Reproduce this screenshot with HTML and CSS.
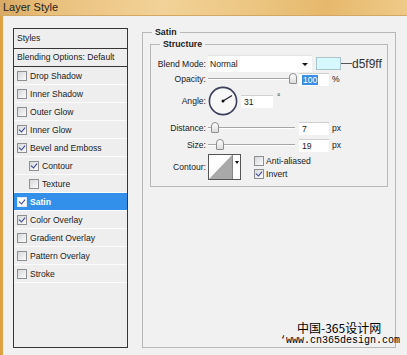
FILE: index.html
```html
<!DOCTYPE html>
<html lang="en">
<head>
  <meta charset="UTF-8" />
  <title>Layer Style</title>
  <link rel="stylesheet" href="styles.css">
</head>
<body>
  <div class="titlebar">Layer Style</div>

  <div class="window">
    <div class="styles-panel">
      <div class="panel-head">Styles</div>
      <div class="panel-blend">Blending Options: Default</div>
      <div class="fx"><span class="cb"></span>Drop Shadow</div>
      <div class="fx"><span class="cb"></span>Inner Shadow</div>
      <div class="fx"><span class="cb"></span>Outer Glow</div>
      <div class="fx"><span class="cb on"></span>Inner Glow</div>
      <div class="fx"><span class="cb on"></span>Bevel and Emboss</div>
      <div class="fx sub"><span class="cb on"></span>Contour</div>
      <div class="fx sub"><span class="cb"></span>Texture</div>
      <div class="fx active"><span class="cb on"></span>Satin</div>
      <div class="fx"><span class="cb on"></span>Color Overlay</div>
      <div class="fx"><span class="cb"></span>Gradient Overlay</div>
      <div class="fx"><span class="cb"></span>Pattern Overlay</div>
      <div class="fx"><span class="cb"></span>Stroke</div>
    </div>

    <fieldset class="group">
      <legend>Satin</legend>
      <fieldset class="group inner">
        <legend>Structure</legend>

        <div class="row r-blend">
          <span class="lbl">Blend Mode:</span>
          <div class="select">Normal<span class="arrow"></span></div>
          <span class="swatch"></span>
          <span class="leader"></span>
          <span class="hex">d5f9ff</span>
        </div>

        <div class="row r-field">
          <span class="lbl">Opacity:</span>
          <div class="slider"><span class="thumb" style="left:81px"></span></div>
          <span class="field"><span class="sel">100</span></span>
          <span class="unit">%</span>
        </div>

        <div class="row r-angle">
          <span class="lbl">Angle:</span>
          <svg class="dial" width="30" height="30" viewBox="0 0 30 30">
            <circle cx="15" cy="15" r="13.6" fill="#f7f7f7" stroke="#3c3f5c" stroke-width="1.6"/>
            <line x1="15" y1="15" x2="24" y2="9.6" stroke="#1c1c2c" stroke-width="1.2"/>
            <circle cx="15" cy="15" r="1.5" fill="#111"/>
          </svg>
          <span class="field angle">31</span>
          <span class="deg">°</span>
        </div>

        <div class="row r-field r-dist">
          <span class="lbl">Distance:</span>
          <div class="slider"><span class="thumb" style="left:3px"></span></div>
          <span class="field">7</span>
          <span class="unit">px</span>
        </div>

        <div class="row r-field r-size">
          <span class="lbl">Size:</span>
          <div class="slider"><span class="thumb" style="left:8px"></span></div>
          <span class="field">19</span>
          <span class="unit">px</span>
        </div>

        <div class="row r-contour">
          <span class="lbl">Contour:</span>
          <div class="contour">
            <svg width="23" height="24" viewBox="0 0 23 24">
              <rect width="23" height="24" fill="#fff"/>
              <polygon points="0,24 23,0 23,24" fill="#a9a9a9"/>
            </svg>
            <span class="drop"><span class="arrow"></span></span>
          </div>
          <div class="checks">
            <div class="check"><span class="cb"></span>Anti-aliased</div>
            <div class="check"><span class="cb on"></span>Invert</div>
          </div>
        </div>
      </fieldset>
    </fieldset>

    <div class="watermark">
      <div class="wm-cn">中国-365设计网</div>
      <div class="wm-url">‘www.cn365design.com</div>
    </div>
  </div>
</body>
</html>
```

FILE: styles.css
```css
body {
  margin: 0;
  width: 407px;
  height: 355px;
  overflow: hidden;
  font-family: "Liberation Sans", Arial, sans-serif;
  font-size: 8.6px;
  color: #1b1b1b;
  background: #f0f0f0;
}

.titlebar {
  height: 15px;
  padding-left: 3px;
  font-size: 11px;
  line-height: 14px;
  color: #1e1e1e;
  border-bottom: 1px solid #d2a866;
  background: linear-gradient(90deg, #d8aa63 0%, #e9c07c 12%, #f2d298 40%, #ecc682 62%, #e6b86c 80%, #efca88 100%);
}

.window {
  position: relative;
  display: flex;
  gap: 14px;
  height: 339px;
  box-sizing: border-box;
  padding: 12px 11px 0 10px;
  border-left: 3px solid #e0a046;
  background: #f1f1f1;
}

/* left list of effects */
.styles-panel {
  flex: none;
  width: 115px;
  height: 320px;
  box-sizing: border-box;
  border: 1px solid #363636;
  background: #eeeeee;
}
.panel-head {
  height: 19px;
  line-height: 19px;
  padding-left: 3px;
  border-bottom: 1px solid #363636;
}
.panel-blend {
  height: 17px;
  line-height: 17px;
  padding-left: 3px;
  border-bottom: 1px solid #363636;
}
.fx {
  display: flex;
  align-items: center;
  gap: 3px;
  height: 17px;
  padding-left: 3px;
  border-bottom: 1px solid #fbfbfb;
}
.fx.sub {
  padding-left: 15px;
}
.fx.active {
  background: #3390ea;
  color: #fff;
  font-weight: bold;
}

.cb {
  position: relative;
  flex: none;
  width: 10px;
  height: 10px;
  box-sizing: border-box;
  border: 1px solid #8d8f92;
  background: linear-gradient(135deg, #d6d8da, #fbfbfb);
}
.cb.on::after {
  content: "";
  position: absolute;
  left: 2px;
  top: 0;
  width: 3px;
  height: 5px;
  border-right: 1.5px solid #35408e;
  border-bottom: 1.5px solid #35408e;
  transform: rotate(40deg);
}
.fx.active .cb {
  background: #fff;
  border-color: #e0e8f4;
}

/* group boxes */
.group {
  flex: none;
  width: 254px;
  height: 320px;
  box-sizing: border-box;
  margin: 0;
  padding: 4px 7px 0;
  border: 1px solid #b8b8b8;
  min-width: 0;
}
.group legend {
  font-weight: bold;
  font-size: 8.8px;
  line-height: 8px;
  padding: 0 3px;
  margin-left: 2px;
}
.group.inner {
  width: auto;
  height: auto;
  padding: 7px 0 6px 0;
}
.group.inner legend {
  margin-left: 9px;
}

.row {
  display: flex;
  align-items: center;
}
.lbl {
  flex: none;
  width: 55px;
  margin-right: 2px;
  text-align: right;
}

.r-blend { height: 17px; }
.r-field { height: 14px; }
.r-angle { height: 30px; }
.r-dist { margin-top: 5px; }
.r-size { margin-top: 3px; }
.r-contour { height: 26px; margin-top: 2px; }

.select {
  position: relative;
  width: 104px;
  height: 17px;
  line-height: 17px;
  padding-left: 2px;
  box-sizing: border-box;
  background: #fff;
  border-top: 1px solid #e4e4e4;
}
.arrow {
  position: absolute;
  right: 4px;
  top: 7px;
  border-left: 3px solid transparent;
  border-right: 3px solid transparent;
  border-top: 3px solid #111;
}
.swatch {
  width: 25px;
  height: 13px;
  margin-left: 4px;
  box-sizing: border-box;
  border: 1px solid #a9c4cc;
  background: #d5f9ff;
}
.leader {
  width: 11px;
  height: 1px;
  background: #555;
}
.hex {
  font-size: 12px;
  color: #333;
}

.slider {
  position: relative;
  width: 89px;
  height: 14px;
  margin-right: 2px;
}
.slider::before {
  content: "";
  position: absolute;
  left: 0;
  right: 2px;
  top: 6px;
  height: 1px;
  background: #a6a6a6;
  border-bottom: 1px solid #fff;
}
.thumb {
  position: absolute;
  top: 1px;
  width: 8px;
  height: 11px;
  box-sizing: border-box;
  border: 1px solid #8e8e8e;
  border-radius: 4px 4px 1px 1px;
  background: linear-gradient(#fefefe, #dcdcdc);
}

.field {
  width: 30px;
  height: 13px;
  line-height: 13px;
  padding-left: 3px;
  box-sizing: border-box;
  background: #fff;
  border-top: 1px solid #d0d0d0;
}
.field .sel {
  background: #3a8ee6;
  color: #fff;
  padding: 0 1px;
}
.field.angle {
  width: 32px;
  margin-left: 3px;
}
.unit {
  margin-left: 3px;
}
.deg {
  margin: -8px 0 0 4px;
}

.contour {
  display: flex;
  width: 33px;
  height: 26px;
  box-sizing: border-box;
  border: 1px solid #555;
}
.contour svg {
  display: block;
}
.contour .drop {
  position: relative;
  flex: 1;
  background: #fff;
  border-left: 1px solid #888;
}
.contour .drop .arrow {
  right: 1px;
  top: 6px;
  border-left-width: 2.5px;
  border-right-width: 2.5px;
}
.checks {
  display: flex;
  flex-direction: column;
  gap: 3px;
  margin-left: 13px;
}
.check {
  display: flex;
  align-items: center;
  gap: 2px;
}

.watermark {
  position: absolute;
  left: 277px;
  top: 304px;
  width: 130px;
}
.wm-cn {
  padding-left: 17px;
  font-family: "Noto Sans CJK SC", sans-serif;
  font-size: 12px;
  line-height: 15px;
  color: #000;
}
.wm-url {
  font-family: "Liberation Mono", monospace;
  font-size: 10px;
  line-height: 12px;
  color: #000;
}
```
